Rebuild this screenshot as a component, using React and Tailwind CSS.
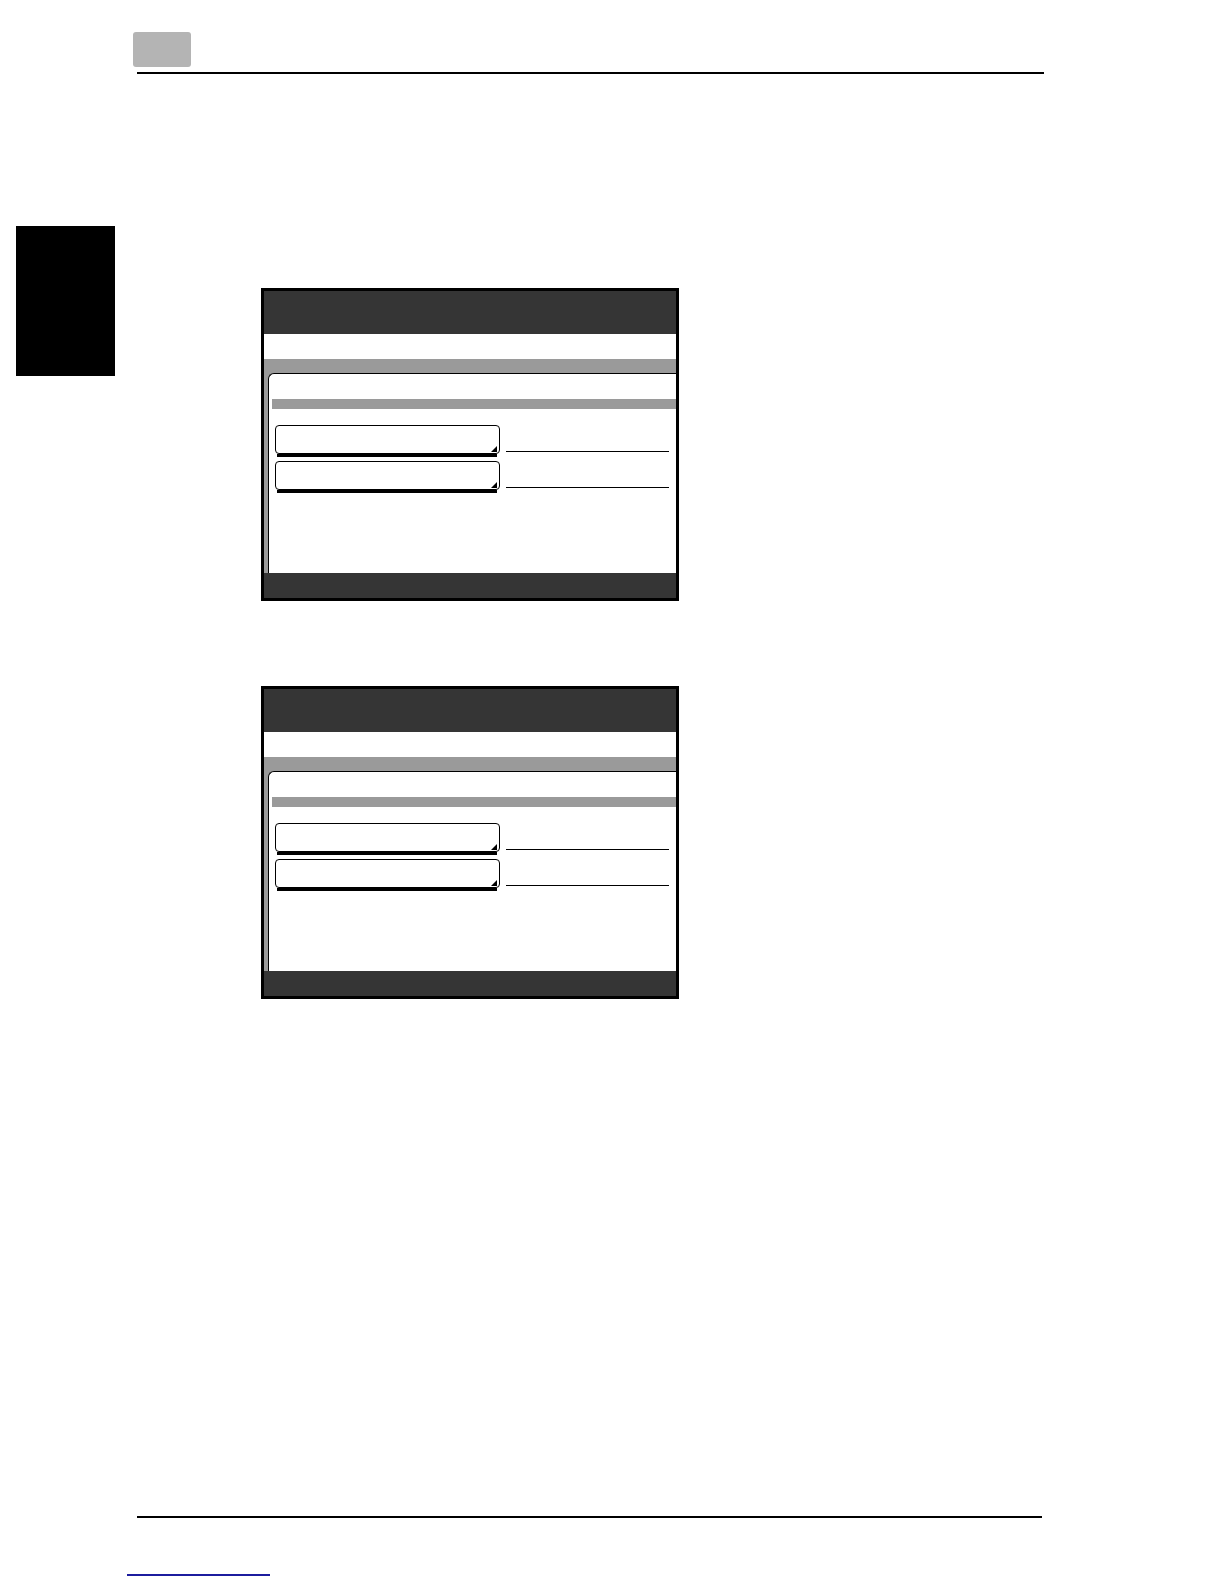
import React from "react";

function MenuButton() {
  return (
    <div className="flex items-start">
      <div className="flex flex-col w-[225px]">
        <div className="relative h-[29px] border border-black rounded-[4px] bg-white">
          {/* corner mark */}
          <svg
            className="absolute right-[2px] bottom-[1px]"
            width="6"
            height="6"
            viewBox="0 0 6 6"
          >
            <polygon points="6,0 6,6 0,6" fill="#000" />
          </svg>
        </div>
        <div className="h-[3px] bg-black ml-[2px] mr-[3px]" />
      </div>
      <div className="ml-[6px] w-[163px] h-[27px] border-b border-black" />
    </div>
  );
}

function Screen() {
  return (
    <div className="w-[418px] h-[313px] border-[3px] border-black bg-white flex flex-col">
      {/* title bar */}
      <div className="h-[43px] bg-[#353535]" />
      {/* message area */}
      <div className="h-[25px] bg-white" />
      {/* body */}
      <div className="flex-1 flex flex-col bg-[#9a9a9a] pl-[4px] pt-[14px]">
        <div className="flex-1 flex flex-col bg-white border-l border-t border-black rounded-tl-[6px]">
          <div className="h-[25px]" />
          <div className="h-[10px] bg-[#9a9a9a] ml-[3px]" />
          <div className="flex flex-col gap-[4px] mt-[16px] ml-[6px]">
            <MenuButton />
            <MenuButton />
          </div>
        </div>
      </div>
      {/* bottom bar */}
      <div className="h-[25px] bg-[#353535]" />
    </div>
  );
}

export default function App() {
  return (
    <div
      className="w-[1224px] h-[1584px] bg-white flex flex-col"
      style={{ fontFamily: '"Liberation Sans", Arial, sans-serif' }}
    >
      {/* page header */}
      <div className="pt-[32px] pl-[133px]">
        <div className="w-[58px] h-[35px] bg-[#b4b4b4] rounded-[3px]" />
      </div>
      <div className="ml-[137px] w-[907px] h-[2px] bg-black mt-[5px]" />

      {/* content */}
      <div className="flex">
        <div className="ml-[16px] mt-[152px] w-[99px] h-[150px] bg-black" />
        <div className="ml-[146px] mt-[214px] flex flex-col gap-[85px]">
          <Screen />
          <Screen />
        </div>
      </div>

      {/* page footer */}
      <div className="mt-auto pb-[8px]">
        <div className="ml-[137px] w-[905px] h-[2px] bg-black" />
        <div className="ml-[127px] mt-[56px] w-[143px] h-[2px] bg-[#1c1c9e]" />
      </div>
    </div>
  );
}
